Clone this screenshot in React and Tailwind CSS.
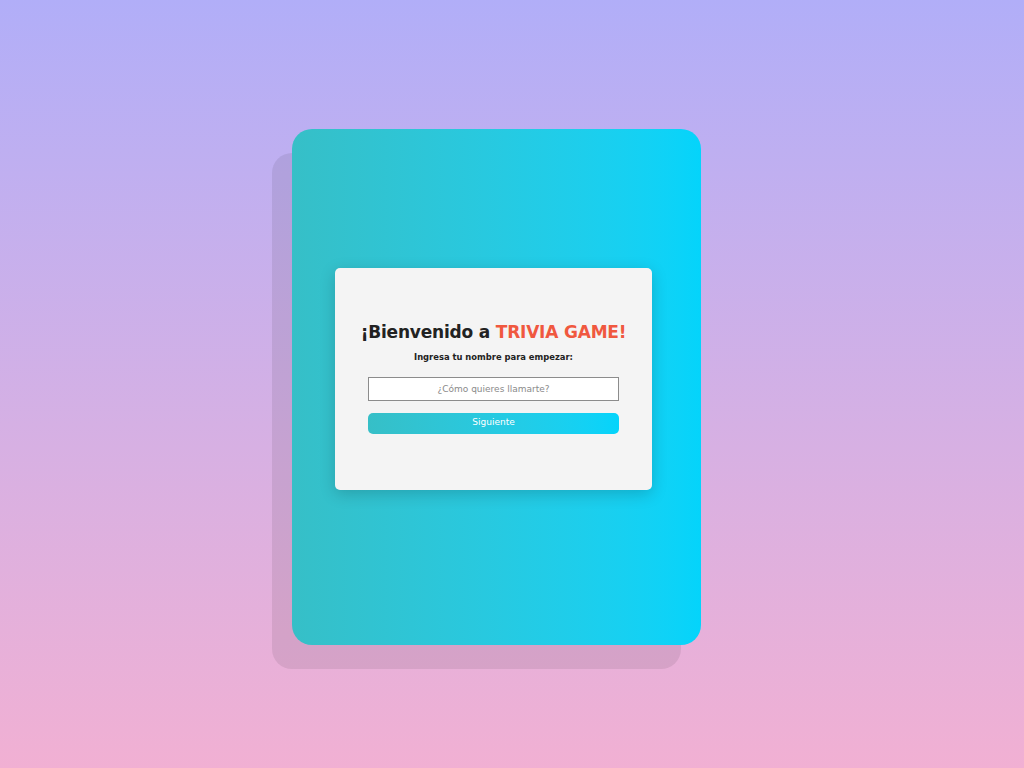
import React, { useState } from "react";

const font = { fontFamily: '"DejaVu Sans", "Noto Sans", sans-serif' };

export default function App() {
  const [name, setName] = useState("");

  return (
    <div
      className="w-full h-screen flex items-center justify-center pr-[31px] pt-[6px] bg-gradient-to-b from-[#b1aef8] to-[#f1b0d3]"
      style={font}
    >
      {/* Card with offset backdrop */}
      <div className="relative w-[409px] h-[516px]">
        <div className="absolute left-[-20px] top-[24px] w-[409px] h-[516px] rounded-[20px] bg-black/[0.08]" />
        <div className="relative w-full h-full rounded-[20px] bg-gradient-to-r from-[#36bfc7] to-[#04d4fb] flex items-center justify-center">
          <div className="mr-[6px] mb-[16px] w-[317px] h-[222px] bg-[#f4f4f4] rounded-[5px] shadow-[0_4px_16px_rgba(0,0,0,0.18)] flex flex-col items-center justify-center">
            <h1 className="text-[17px] font-bold text-[#222] leading-none tracking-[-0.2px]">
              ¡Bienvenido a <span className="text-[#f0583f]">TRIVIA GAME!</span>
            </h1>
            <p className="mt-[12px] text-[8.4px] font-bold text-[#222] leading-none">
              Ingresa tu nombre para empezar:
            </p>
            <input
              value={name}
              onChange={(e) => setName(e.target.value)}
              placeholder="¿Cómo quieres llamarte?"
              className="mt-[15px] w-[251px] h-[24px] bg-white border border-[#8c8c8c] text-center text-[9px] text-[#333] placeholder:text-[#8a8a8a] outline-none"
            />
            <button className="mt-[12px] w-[251px] h-[21px] rounded-[5px] bg-gradient-to-r from-[#36bfc7] to-[#04d4fb] text-white text-[9px]">
              Siguiente
            </button>
          </div>
        </div>
      </div>
    </div>
  );
}
